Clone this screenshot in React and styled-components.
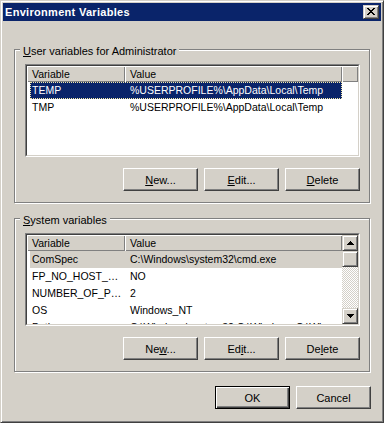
import React from 'react'
import styled, { createGlobalStyle, css } from 'styled-components'

const GlobalStyle = createGlobalStyle`
  html, body {
    margin: 0;
    padding: 0;
    background: #d4d0c8;
  }
  body {
    font-family: "Liberation Sans", Arial, sans-serif;
    font-size: 11px;
    color: #000;
  }
`

const raised = css`
  border: 1px solid;
  border-color: #d4d0c8 #404040 #404040 #d4d0c8;
  box-shadow: inset 1px 1px #fff, inset -1px -1px #808080;
  background: #d4d0c8;
  box-sizing: border-box;
`

const Window = styled.div`
  width: 384px;
  height: 423px;
  box-sizing: border-box;
  background: #d4d0c8;
  border: 1px solid;
  border-color: #d4d0c8 #404040 #404040 #d4d0c8;
  box-shadow: inset 1px 1px #fff, inset -1px -1px #808080;
  padding: 2px;
  display: flex;
  flex-direction: column;
`

const TitleBar = styled.div`
  height: 18px;
  flex-shrink: 0;
  background: #0a246a;
  display: flex;
  align-items: center;
  justify-content: space-between;
  padding: 0 2px;
`

const Title = styled.span`
  color: #fff;
  font-weight: bold;
  font-size: 11px;
  letter-spacing: 0.3px;
`

const CloseButton = styled.div`
  ${raised};
  width: 16px;
  height: 14px;
  display: flex;
  align-items: center;
  justify-content: center;
  padding: 0 1px 1px 0;
`

const Body = styled.div`
  flex: 1;
  display: flex;
  flex-direction: column;
  padding: 20px 11px 0 11px;
`

const GroupBox = styled.fieldset`
  margin: ${({ $top }) => $top || 0}px 0 0;
  padding: 6px 9px 11px 10px;
  border: 1px solid #808080;
  box-shadow: inset 1px 1px #fff, 1px 1px #fff;
  min-width: 0;
`

const Legend = styled.legend`
  margin-left: -5px;
  padding: 4px 3px 0;
  line-height: 13px;
  background: #d4d0c8;
`

const ListFrame = styled.div`
  height: 93px;
  box-sizing: border-box;
  border: 1px solid;
  border-color: #808080 #fff #fff #808080;
  font-size: 10.5px;
`

const ListInner = styled.div`
  height: 100%;
  box-sizing: border-box;
  border: 1px solid;
  border-color: #404040 #d4d0c8 #d4d0c8 #404040;
  background: #fff;
  display: flex;
  overflow: hidden;
`

const ListBody = styled.div`
  flex: 1;
  min-width: 0;
  display: flex;
  flex-direction: column;
  overflow: hidden;
`

const Header = styled.div`
  display: flex;
  height: 16px;
  flex-shrink: 0;
`

const HeaderCell = styled.div`
  ${({ $w }) => ($w ? `width: ${$w}px;` : 'flex: 1;')}
  flex-shrink: 0;
  box-sizing: border-box;
  padding-left: 5px;
  line-height: 16px;
  background: #d4d0c8;
  box-shadow: inset 1px 1px #fff, inset -1px -1px #808080;
  white-space: nowrap;
  overflow: hidden;
`

const Row = styled.div`
  display: flex;
  flex-shrink: 0;
  height: 17px;
  line-height: 17px;
  margin-left: 3px;
  width: 312px;
  box-sizing: border-box;
  ${({ $state }) =>
    $state === 'focus' &&
    css`
      background: #0a246a;
      color: #fff;
      outline: 1px dotted #f4e9a8;
      outline-offset: -1px;
    `}
  ${({ $state }) =>
    $state === 'inactive' &&
    css`
      background: #d4d0c8;
    `}
`

const Cell = styled.div`
  width: ${({ $w }) => $w}px;
  flex-shrink: 0;
  box-sizing: border-box;
  padding-left: ${({ $pad }) => $pad}px;
  padding-right: 2px;
  white-space: nowrap;
  overflow: hidden;
  text-overflow: ellipsis;
`

const ScrollBar = styled.div`
  width: 16px;
  flex-shrink: 0;
  display: flex;
  flex-direction: column;
`

const ScrollButton = styled.div`
  ${raised};
  height: 16px;
  flex-shrink: 0;
  display: flex;
  align-items: center;
  justify-content: center;
`

const Track = styled.div`
  flex: 1;
  background: repeating-conic-gradient(#d4d0c8 0 25%, #fff 0 50%) 0 0 / 2px 2px;
`

const ButtonRow = styled.div`
  display: flex;
  justify-content: flex-end;
  gap: 6px;
  margin-top: ${({ $top }) => $top}px;
  margin-right: ${({ $right }) => $right || 0}px;
`

const Button = styled.button`
  width: 75px;
  height: 23px;
  box-sizing: border-box;
  padding: 0;
  font-family: "Liberation Sans", Arial, sans-serif;
  font-size: 11px;
  color: #000;
  background: #d4d0c8;
  border: 1px solid;
  border-color: #fff #404040 #404040 #fff;
  box-shadow: inset -1px -1px #808080;
  ${({ $default }) =>
    $default &&
    css`
      border-color: #000;
      box-shadow: inset 1px 1px #fff, inset -1px -1px #404040,
        inset -2px -2px #808080;
    `}

  u {
    text-underline-offset: 1px;
  }
`

const Arrow = ({ down }) => (
  <svg width="7" height="4" viewBox="0 0 7 4" shapeRendering="crispEdges">
    <path
      fill="#000"
      d={
        down
          ? 'M0 0h7v1h-7z M1 1h5v1h-5z M2 2h3v1h-3z M3 3h1v1h-1z'
          : 'M3 0h1v1h-1z M2 1h3v1h-3z M1 2h5v1h-5z M0 3h7v1h-7z'
      }
    />
  </svg>
)

const CloseGlyph = () => (
  <svg width="8" height="7" viewBox="0 0 8 7" shapeRendering="crispEdges">
    <path
      fill="#000"
      d="M0 0h2v1h-2z M6 0h2v1h-2z M1 1h2v1h-2z M5 1h2v1h-2z M2 2h4v1h-4z M3 3h2v1h-2z M2 4h4v1h-4z M1 5h2v1h-2z M5 5h2v1h-2z M0 6h2v1h-2z M6 6h2v1h-2z"
    />
  </svg>
)

const userVars = [
  { name: 'TEMP', value: '%USERPROFILE%\\AppData\\Local\\Temp' },
  { name: 'TMP', value: '%USERPROFILE%\\AppData\\Local\\Temp' }
]

const systemVars = [
  { name: 'ComSpec', value: 'C:\\Windows\\system32\\cmd.exe' },
  { name: 'FP_NO_HOST_CHECK', value: 'NO' },
  { name: 'NUMBER_OF_PROCESSORS', value: '2' },
  { name: 'OS', value: 'Windows_NT' },
  { name: 'Path', value: 'C:\\Windows\\system32;C:\\Windows;C:\\Windows\\System32\\Wbem' }
]

const VarList = ({ rows, selected, state, scroll }) => (
  <ListFrame>
    <ListInner>
      <ListBody>
        <Header>
          <HeaderCell $w={98}>Variable</HeaderCell>
          <HeaderCell $w={217}>Value</HeaderCell>
          {!scroll && <HeaderCell />}
        </Header>
        {rows.map((r, i) => (
          <Row key={r.name} $state={i === selected ? state : undefined}>
            <Cell $w={95} $pad={2}>{r.name}</Cell>
            <Cell $w={217} $pad={5}>{r.value}</Cell>
          </Row>
        ))}
      </ListBody>
      {scroll && (
        <ScrollBar>
          <ScrollButton>
            <Arrow />
          </ScrollButton>
          <ScrollButton />
          <Track />
          <ScrollButton>
            <Arrow down />
          </ScrollButton>
        </ScrollBar>
      )}
    </ListInner>
  </ListFrame>
)

const App = () => (
  <>
    <GlobalStyle />
    <Window>
      <TitleBar>
        <Title>Environment Variables</Title>
        <CloseButton>
          <CloseGlyph />
        </CloseButton>
      </TitleBar>
      <Body>
        <GroupBox>
          <Legend>
            <u>U</u>ser variables for Administrator
          </Legend>
          <VarList rows={userVars} selected={0} state="focus" />
          <ButtonRow $top={11}>
            <Button>
              <u>N</u>ew...
            </Button>
            <Button>
              <u>E</u>dit...
            </Button>
            <Button>
              <u>D</u>elete
            </Button>
          </ButtonRow>
        </GroupBox>
        <GroupBox $top={7}>
          <Legend>
            <u>S</u>ystem variables
          </Legend>
          <VarList rows={systemVars} selected={0} state="inactive" scroll />
          <ButtonRow $top={11}>
            <Button>
              Ne<u>w</u>...
            </Button>
            <Button>
              Ed<u>i</u>t...
            </Button>
            <Button>
              De<u>l</u>ete
            </Button>
          </ButtonRow>
        </GroupBox>
        <ButtonRow $top={14} $right={-1}>
          <Button $default>OK</Button>
          <Button>Cancel</Button>
        </ButtonRow>
      </Body>
    </Window>
  </>
)

export default App
